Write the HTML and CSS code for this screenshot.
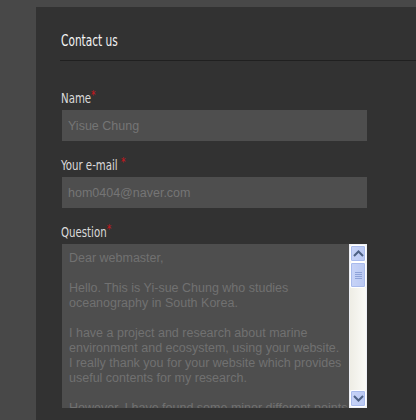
FILE: index.html
```html
<!DOCTYPE html>
<html lang="en">
<head>
  <meta charset="UTF-8" />
  <meta name="viewport" content="width=device-width, initial-scale=1.0" />
  <title>Contact us</title>
  <link rel="stylesheet" href="styles.css">
</head>
<body>

  <div class="panel">
    <h2 class="panel-title"><span>Contact us</span></h2>

    <form class="contact-form">
      <div class="field">
        <label for="name">Name<span class="req">*</span></label>
        <input id="name" type="text" placeholder="Yisue Chung">
      </div>

      <div class="field">
        <label for="email">Your e-mail <span class="req">*</span></label>
        <input id="email" type="text" placeholder="hom0404@naver.com">
      </div>

      <div class="field">
        <label for="question">Question<span class="req">*</span></label>
        <div class="textbox">
          <textarea id="question">Dear webmaster,

Hello. This is Yi-sue Chung who studies oceanography in South Korea.

I have a project and research about marine environment and ecosystem, using your website.
I really thank you for your website which provides useful contents for my research.

However, I have found some minor different points in the data of your website.</textarea>
          <!-- old style scrollbar -->
          <div class="scrollbar">
            <div class="sb-btn">
              <svg width="11" height="7" viewBox="0 0 11 7"><path d="M1 6 L5.5 1.5 L10 6" fill="none" stroke="#4d6185" stroke-width="2"/></svg>
            </div>
            <div class="sb-thumb">
              <span></span><span></span><span></span><span></span>
            </div>
            <div class="sb-track"></div>
            <div class="sb-btn">
              <svg width="11" height="7" viewBox="0 0 11 7"><path d="M1 1 L5.5 5.5 L10 1" fill="none" stroke="#4d6185" stroke-width="2"/></svg>
            </div>
          </div>
        </div>
      </div>
    </form>
  </div>

</body>
</html>
```

FILE: styles.css
```css
/* Base */
* {
  box-sizing: border-box;
  margin: 0;
  padding: 0;
}

body {
  background: #484848;
  font-family: 'Liberation Sans', Arial, sans-serif;
  padding: 7px 0 0 36px;
  height: 420px;
  overflow: hidden;
}

.panel {
  background: #323232;
  min-height: 420px;
  padding: 24px 0 0 24px;
}

.panel-title {
  font-family: 'DejaVu Sans Condensed', sans-serif;
  font-weight: normal;
  font-size: 15.5px;
  color: #f4f4f4;
  line-height: 20px;
  height: 30px;
  padding-left: 1px;
  border-bottom: 1px solid #202020;
}

.panel-title span {
  display: inline-block;
  transform: scaleX(0.76);
  transform-origin: left center;
}

/* Form */
.contact-form {
  padding: 29px 0 0 2px;
  width: 307px;
}

.field {
  margin-bottom: 16px;
}

.field label {
  display: block;
  font-family: 'DejaVu Sans Condensed', sans-serif;
  font-size: 13.5px;
  color: #dadada;
  line-height: 16px;
  margin-bottom: 4px;
  margin-left: -1px;
  transform: scaleX(0.84);
  transform-origin: left center;
}

.req {
  color: #c8151b;
  font-size: 12px;
  vertical-align: top;
  line-height: 10px;
}

.field input {
  display: block;
  width: 305px;
  height: 31px;
  background: #4e4e4e;
  border: none;
  padding: 0 6px;
  font-family: 'Liberation Sans', Arial, sans-serif;
  font-size: 12.5px;
  color: #777;
  outline: none;
}

.field input::placeholder {
  color: #757575;
}

.textbox {
  display: flex;
  width: 305px;
  height: 164px;
}

.textbox textarea {
  flex: 1;
  background: #4e4e4e;
  border: none;
  resize: none;
  overflow: hidden;
  padding: 7px 0 0 7px;
  font-family: 'Liberation Sans', Arial, sans-serif;
  font-size: 12.5px;
  line-height: 15px;
  color: #717171;
  outline: none;
}

/* Scrollbar */
.scrollbar {
  width: 18px;
  display: flex;
  flex-direction: column;
  background: #f4f4ef;
  border: 1px solid #eef0f6;
}

.sb-btn,
.sb-thumb {
  background: linear-gradient(90deg, #c8d4f7, #b9c8f3);
  border: 1px solid #fff;
  border-radius: 2px;
  box-shadow: inset 0 0 0 1px #a9bbed;
}

.sb-btn {
  height: 17px;
  display: flex;
  align-items: center;
  justify-content: center;
}

.sb-thumb {
  height: 26px;
  display: flex;
  flex-direction: column;
  align-items: center;
  justify-content: center;
  gap: 1px;
}

.sb-thumb span {
  display: block;
  width: 7px;
  height: 1px;
  background: #8ea2d8;
}

.sb-track {
  flex: 1;
  background: linear-gradient(90deg, #eeede5, #fbfbf8);
}
```
